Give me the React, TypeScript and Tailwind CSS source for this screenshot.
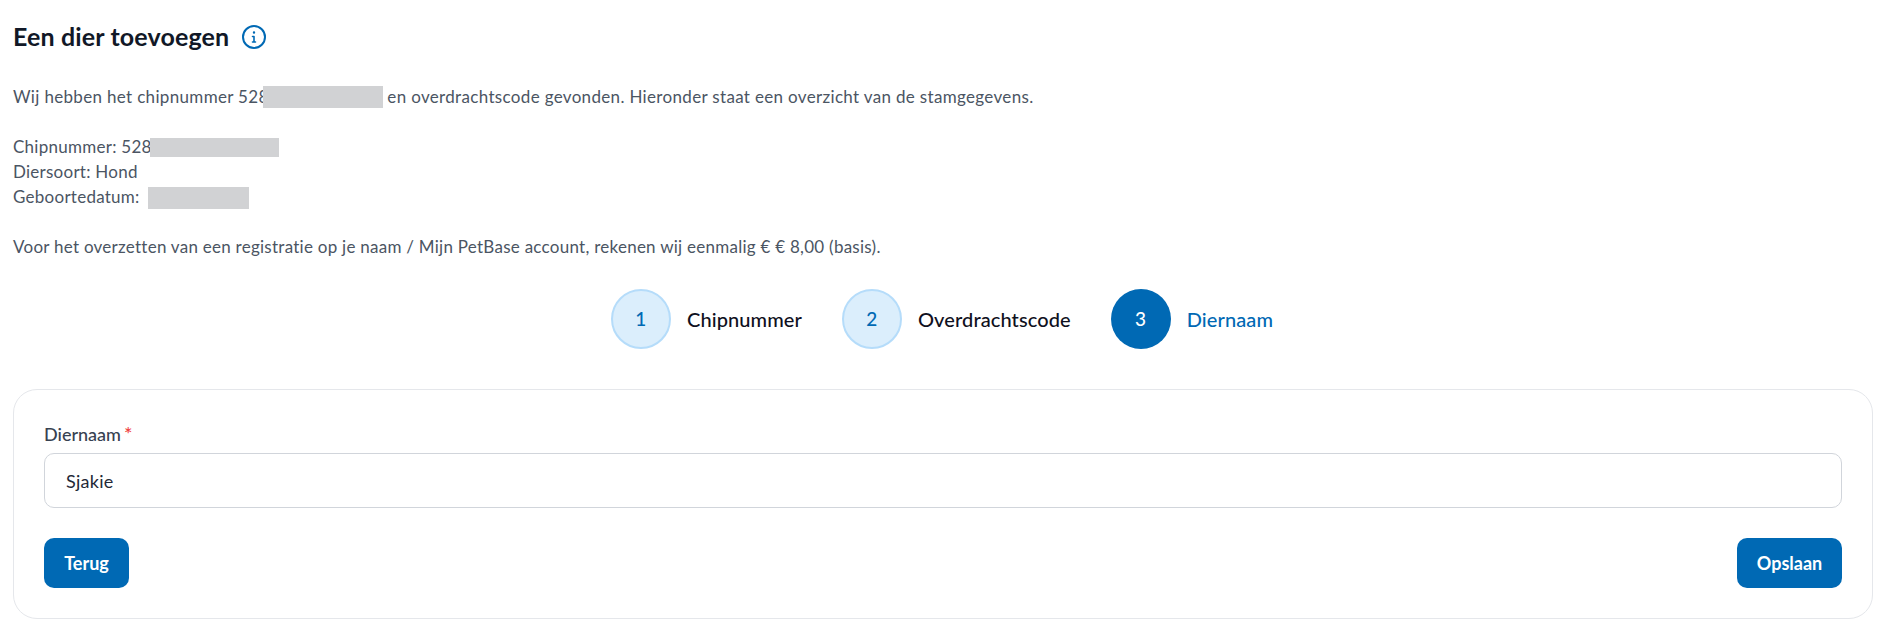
import React from "react";

const Mask = ({ w, h, className = "" }: { w: string; h: string; className?: string }) => (
  <span className={`inline-block align-middle bg-[#d1d2d4] ${w} ${h} ${className}`} />
);

function Step({ n, label, active }: { n: number; label: string; active?: boolean }) {
  return (
    <div className="flex items-center gap-[16px]">
      <div
        className={
          active
            ? "w-[60px] h-[60px] rounded-full flex items-center justify-center bg-[#0069b4] text-white text-[19px] font-medium"
            : "w-[60px] h-[60px] rounded-full flex items-center justify-center bg-[#dbeefc] border-2 border-[#b5dcfa] text-[#0069b4] text-[19px] font-medium"
        }
      >
        {n}
      </div>
      <span className={active ? "text-[20px] tracking-[0.1px] font-medium text-[#0069b4]" : "text-[20px] tracking-[0.1px] font-medium text-[#0f1020]"}>{label}</span>
    </div>
  );
}

export default function App() {
  return (
    <div className="w-[1891px] h-[643px] bg-white pl-[13px] pr-[18px] text-[#4b5563] text-[17px] tracking-[0.26px] overflow-hidden font-['Lato','Liberation_Sans',sans-serif]">
      <div className="flex items-center gap-[13px] h-[24px] mt-[25px]">
        <h1 className="text-[25px] font-bold tracking-[0.15px] text-[#111827]">Een dier toevoegen</h1>
        <svg width="24" height="24" viewBox="0 0 24 24" fill="none" stroke="#0069b4" strokeWidth="2" strokeLinecap="round" strokeLinejoin="round">
          <circle cx="12" cy="12" r="11" />
          <path d="M12 11.5v5.5M10.5 11.5H12M10.5 17h3" strokeWidth="1.6" />
          <circle cx="12" cy="7.5" r="0.6" fill="#0069b4" strokeWidth="1.2" />
        </svg>
      </div>

      <p className="mt-[35px] h-[25px] leading-[25px] whitespace-nowrap tracking-[0.33px]">
        Wij hebben het chipnummer 528<Mask w="w-[120px]" h="h-[22px]" className="-mt-[3px] -ml-[6px]" /> en overdrachtscode gevonden. Hieronder staat een overzicht van de stamgegevens.
      </p>

      <div className="mt-[25px] leading-[25px]">
        <div className="h-[25px] whitespace-nowrap">Chipnummer: 528<Mask w="w-[129px]" h="h-[19px]" className="-mt-[3px] -ml-[2px]" /></div>
        <div className="h-[25px]">Diersoort: Hond</div>
        <div className="h-[25px] whitespace-nowrap">Geboortedatum: <Mask w="w-[101px]" h="h-[22px]" className="-mt-[1px] ml-[4px]" /></div>
      </div>

      <p className="mt-[25px] h-[25px] leading-[25px] whitespace-nowrap">
        Voor het overzetten van een registratie op je naam / Mijn PetBase account, rekenen wij eenmalig € € 8,00 (basis).
      </p>

      <div className="mt-[30px] flex justify-center gap-[40px] pr-[2px]">
        <Step n={1} label="Chipnummer" />
        <Step n={2} label="Overdrachtscode" />
        <Step n={3} label="Diernaam" active />
      </div>

      <div className="mt-[40px] h-[230px] border border-[#e5e7eb] rounded-[24px] px-[30px] pt-[33px]">
        <label className="block h-[20px] leading-[20px] text-[18px] font-medium tracking-normal text-[#374151]">
          Diernaam<span className="ml-[3px] text-[20px] text-[#ef4444]">*</span>
        </label>
        <input
          readOnly
          value="Sjakie"
          className="block mt-[10px] w-full h-[55px] rounded-[10px] border border-[#d1d5db] px-[21px] text-[18px] text-[#1f2937] outline-none"
        />
        <div className="mt-[30px] flex justify-between">
          <button className="w-[85px] h-[50px] rounded-[10px] bg-[#0069b4] text-white font-bold text-[18px] tracking-normal">Terug</button>
          <button className="w-[105px] h-[50px] rounded-[10px] bg-[#0069b4] text-white font-bold text-[18px] tracking-normal">Opslaan</button>
        </div>
      </div>
    </div>
  );
}
